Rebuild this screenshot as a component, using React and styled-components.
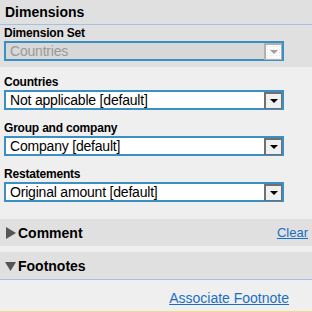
import React from 'react';
import styled, { createGlobalStyle } from 'styled-components';

const GlobalStyle = createGlobalStyle`
  html, body {
    margin: 0;
    padding: 0;
    background: #efefef;
  }
  body {
    font-family: "Liberation Sans", Arial, sans-serif;
  }
`;

const Panel = styled.div`
  width: 312px;
  height: 312px;
  overflow: hidden;
  background: #efefef;
  display: flex;
  flex-direction: column;
`;

const SectionHeader = styled.div`
  height: 24px;
  background: #e0e0e0;
  border-bottom: 1px solid #9ec3e8;
  display: flex;
  align-items: center;
  padding-left: 5px;
  font-size: 14px;
  font-weight: bold;
  color: #000;
`;

const SetArea = styled.div`
  background: #e0e0e0;
  padding: 1px 4px 6px;
`;

const Fields = styled.div`
  padding: 8px 4px 0;
  height: 144px;
`;

const Field = styled.div`
  margin-bottom: 11px;
`;

const Label = styled.div`
  font-size: 12px;
  font-weight: bold;
  color: #000;
  line-height: 15px;
  letter-spacing: -0.2px;
`;

const Select = styled.div`
  width: 280px;
  height: 20px;
  box-sizing: border-box;
  border: 2px solid #3a8fc4;
  background: ${(p) => (p.disabled ? '#d8d8d8' : '#fff')};
  display: flex;
  align-items: center;
  justify-content: space-between;
`;

const Value = styled.span`
  font-size: 14px;
  letter-spacing: -0.2px;
  color: ${(p) => (p.disabled ? '#9a9a9a' : '#000')};
  padding-left: 4px;
  line-height: 16px;
`;

const ArrowBox = styled.div`
  width: 15px;
  height: 14px;
  border: 1px solid ${(p) => (p.disabled ? '#b0b0b0' : '#707070')};
  border-left-width: 2px;
  border-top-width: 2px;
  background: ${(p) =>
    p.disabled
      ? 'radial-gradient(#e4e4e4 35%, #fafafa 40%) 0 0 / 3px 3px'
      : '#f0f0f0'};
  display: flex;
  align-items: center;
  justify-content: center;
`;

const Arrow = styled.div`
  width: 0;
  height: 0;
  border-left: 4px solid transparent;
  border-right: 4px solid transparent;
  border-top: 4px solid ${(p) => (p.disabled ? '#a0a0a0' : '#000')};
  margin-top: 1px;
`;

const Toggle = styled.div`
  height: 27px;
  background: #e0e0e0;
  display: flex;
  align-items: center;
  padding: 0 4px 0 5px;
  margin-bottom: ${(p) => (p.gap ? '6px' : '0')};
  border-bottom: ${(p) => (p.line ? '1px solid #9ec3e8' : 'none')};
`;

const Title = styled.span`
  font-size: 14px;
  font-weight: bold;
  color: #000;
  flex: 1;
`;

const Link = styled.a`
  color: #1a6fc4;
  text-decoration: underline;
  font-size: ${(p) => p.size || 13}px;
  cursor: pointer;
`;

const FootBody = styled.div`
  flex: 1;
  display: flex;
  justify-content: flex-end;
  align-items: center;
  padding: 4px 23px 0 0;
  border-bottom: 1px solid #f3d98f;
`;

const Caret = ({ open }) => (
  <svg width="12" height="12" viewBox="0 0 12 12" style={{ marginRight: 1 }}>
    {open ? (
      <polygon points="0,2 11,2 5.5,11" fill="#555" />
    ) : (
      <polygon points="1,0 11,6 1,12" fill="#555" />
    )}
  </svg>
);

const Dropdown = ({ value, disabled }) => (
  <Select disabled={disabled}>
    <Value disabled={disabled}>{value}</Value>
    <ArrowBox disabled={disabled}>
      <Arrow disabled={disabled} />
    </ArrowBox>
  </Select>
);

const fields = [
  { label: 'Countries', value: 'Not applicable [default]' },
  { label: 'Group and company', value: 'Company [default]' },
  { label: 'Restatements', value: 'Original amount [default]' },
];

export default function App() {
  return (
    <Panel>
      <GlobalStyle />
      <SectionHeader>Dimensions</SectionHeader>
      <SetArea>
        <Label>Dimension Set</Label>
        <Dropdown value="Countries" disabled />
      </SetArea>
      <Fields>
        {fields.map((f) => (
          <Field key={f.label}>
            <Label>{f.label}</Label>
            <Dropdown value={f.value} />
          </Field>
        ))}
      </Fields>
      <Toggle gap>
        <Caret />
        <Title>Comment</Title>
        <Link size={13}>Clear</Link>
      </Toggle>
      <Toggle line>
        <Caret open />
        <Title>Footnotes</Title>
      </Toggle>
      <FootBody>
        <Link size={14}>Associate Footnote</Link>
      </FootBody>
    </Panel>
  );
}
